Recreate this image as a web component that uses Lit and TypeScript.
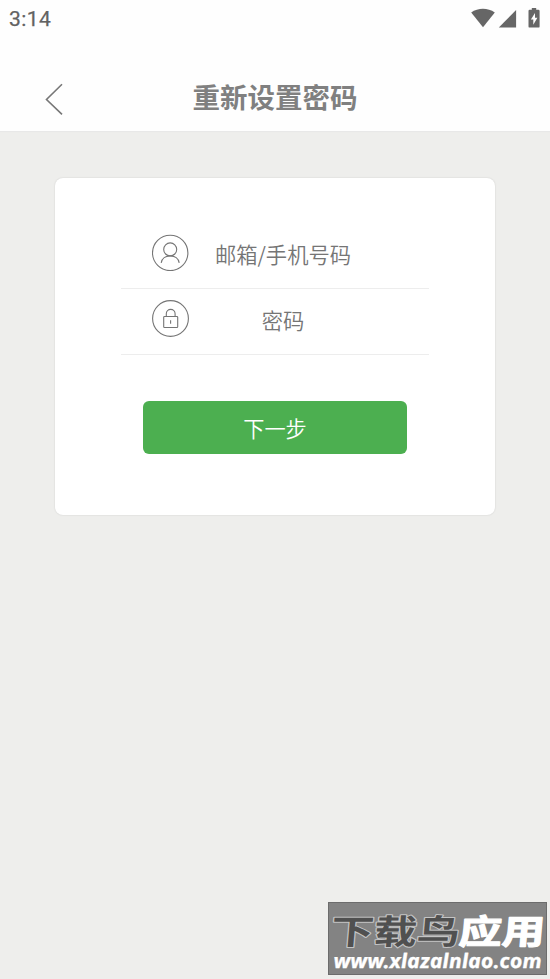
import { css, html, LitElement, svg } from "lit";
import { customElement, property } from "lit/decorators.js";

type Field = {
  icon: "user" | "lock";
  label: string;
};

const fields: Field[] = [
  { icon: "user", label: "邮箱/手机号码" },
  { icon: "lock", label: "密码" },
];

const glyphs = {
  user: svg`
    <circle cx="18.2" cy="18.9" r="17.7" />
    <circle cx="18.2" cy="15.4" r="6.5" />
    <path d="M9.2 28.8C9.9 24.6 13.6 21.9 18.2 21.9S26.5 24.6 27.2 28.8" />
  `,
  lock: svg`
    <circle cx="18.5" cy="18.5" r="17.9" />
    <rect x="11.7" y="16.5" width="14" height="11" rx="0.8" />
    <path d="M14.3 16.5V13.8A4.4 4.4 0 0 1 23.1 13.8V16.5M18.6 20.2V23.7" />
  `,
};

@customElement("status-bar")
export class StatusBar extends LitElement {
  static styles = css`
    :host {
      display: flex;
      justify-content: space-between;
      height: 40px;
      padding: 0 9px;
      box-sizing: border-box;
      color: #626262;
    }
    .time {
      font: 400 21px/39px Roboto, sans-serif;
      letter-spacing: 0.4px;
      -webkit-text-stroke: 0.25px #626262;
    }
    .icons {
      display: block;
      width: 72px;
      height: 40px;
      fill: #666;
    }
  `;

  render() {
    return html`
      <span class="time">3:14</span>
      <svg class="icons" viewBox="0 0 72 40">
        <path d="M2.2 12.5C9.1 7.5 18.8 7.5 25.8 12.5L14 27.2Z" />
        <path d="M29.8 27.6L47.1 10V27.6Z" />
        <path
          fill-rule="evenodd"
          d="M62.8 8H67.2V9.7H69.4Q70.6 9.7 70.6 11V26.4Q70.6 27.6 69.4 27.6H60.7Q59.5 27.6 59.5 26.4V11Q59.5 9.7 60.7 9.7H62.8ZM66 13L61.9 19.5H64.3V24.7L68.4 17.7H66Z"
        />
      </svg>
    `;
  }
}

@customElement("form-field")
export class FormField extends LitElement {
  static styles = css`
    :host {
      display: flex;
      align-items: center;
      height: 66px;
      padding: 0 61px 7px 31px;
      box-sizing: border-box;
      border-bottom: 1px solid #ededed;
    }
    .icon {
      flex: none;
      width: 37px;
      height: 37px;
      fill: none;
      stroke: #757575;
      stroke-width: 1.1;
    }
    .label {
      flex: 1;
      padding: 3px 0 0 9px;
      text-align: center;
      white-space: nowrap;
      font-size: 21.3px;
      font-weight: 350;
      line-height: 30px;
      color: #757575;
    }
  `;

  @property({ attribute: false })
  field!: Field;

  render() {
    return html`
      <svg class="icon" viewBox="0 0 37 37">${glyphs[this.field.icon]}</svg>
      <span class="label">${this.field.label}</span>
    `;
  }
}

@customElement("site-stamp")
export class SiteStamp extends LitElement {
  static styles = css`
    :host {
      display: block;
      width: 219px;
      height: 73px;
    }
    svg {
      display: block;
    }
    .name {
      font: 700 43px "Noto Sans CJK SC", sans-serif;
      paint-order: stroke;
      stroke-linejoin: round;
    }
    .dark {
      fill: #505050;
      stroke: #c4c4c4;
      stroke-width: 2.6px;
    }
    .light {
      fill: #fff;
      stroke: #fff;
      stroke-width: 1.4px;
    }
    .url {
      font: italic 700 20px "Noto Sans", sans-serif;
      fill: #fff;
      stroke: #fff;
      stroke-width: 0.3px;
    }
  `;

  render() {
    return html`
      <svg width="219" height="73" viewBox="0 0 219 73">
        <rect x="0.5" y="0.5" width="218" height="72" fill="#838383" stroke="#6c6c6c" />
        <g transform="translate(0 42) skewX(-5) scale(1 0.79)">
          <text class="name dark" x="2" y="0">下载鸟</text>
          <text class="name light" x="130" y="0">应用</text>
        </g>
        <g transform="translate(6 66) skewX(4)">
          <text class="url" textLength="208" lengthAdjust="spacingAndGlyphs">www.xlazalnlao.com</text>
        </g>
      </svg>
    `;
  }
}

@customElement("app-root")
export class AppRoot extends LitElement {
  static styles = css`
    :host {
      display: flex;
      flex-direction: column;
      position: relative;
      height: 979px;
      overflow: hidden;
      background: #eeeeec;
      font-family: "Noto Sans CJK SC", sans-serif;
    }
    .header {
      height: 131px;
      background: #fefefe;
      box-shadow: 0 1px 1px #e8e8e8;
    }
    .nav {
      display: grid;
      grid-template-columns: 110px 1fr 110px;
      padding-top: 35px;
    }
    .back {
      width: 20px;
      height: 32px;
      margin: 8px 0 0 44px;
      fill: none;
      stroke: #777;
      stroke-width: 1.6;
    }
    .title {
      margin: 0;
      text-align: center;
      font-size: 27.5px;
      line-height: 42px;
      font-weight: 700;
      color: #808080;
    }
    .card {
      width: 440px;
      height: 337px;
      margin: 47px auto 0;
      padding: 45px 66px 0;
      box-sizing: border-box;
      border-radius: 8px;
      background: #fff;
      box-shadow: 0 0 2px rgba(0, 0, 0, 0.14);
    }
    .next {
      display: block;
      width: 264px;
      height: 53px;
      margin: 46px auto 0;
      padding: 0;
      border: 0;
      border-radius: 6px;
      background: #4caf50;
      color: #fff;
      font: 350 21.2px/53px "Noto Sans CJK SC", sans-serif;
    }
    .stamp {
      position: absolute;
      right: 3px;
      bottom: 4px;
    }
  `;

  render() {
    return html`
      <header class="header">
        <status-bar></status-bar>
        <nav class="nav">
          <svg class="back" viewBox="0 0 20 32"><path d="M18 1.2L2.5 16.5L18 31.3" /></svg>
          <h1 class="title">重新设置密码</h1>
        </nav>
      </header>
      <main class="card">
        ${fields.map((field) => html`<form-field .field=${field}></form-field>`)}
        <button class="next">下一步</button>
      </main>
      <site-stamp class="stamp"></site-stamp>
    `;
  }
}
